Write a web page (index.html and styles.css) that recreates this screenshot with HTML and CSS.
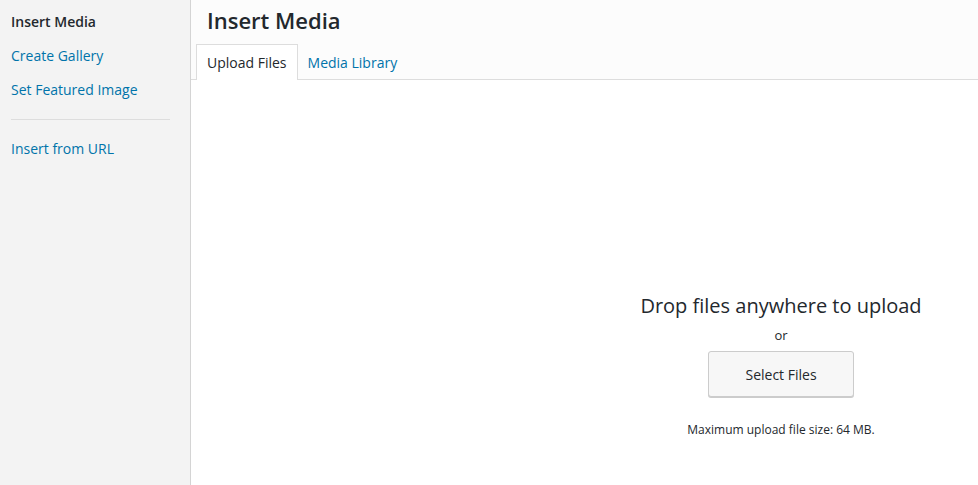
FILE: index.html
```html
<!DOCTYPE html>
<html lang="en">
<head>
    <meta charset="UTF-8">
    <title>Insert Media</title>
    <link rel="stylesheet" href="styles.css">
</head>
<body>

<div class="media-modal">
    <!-- Left menu -->
    <div class="media-menu">
        <a class="menu-item active">Insert Media</a>
        <a class="menu-item" href="#">Create Gallery</a>
        <a class="menu-item" href="#">Set Featured Image</a>
        <div class="separator"></div>
        <a class="menu-item" href="#">Insert from URL</a>
    </div>

    <!-- Main frame -->
    <div class="media-frame">
        <div class="frame-header">
            <h1 class="frame-title">Insert Media</h1>
            <div class="router">
                <a class="tab active">Upload Files</a>
                <a class="tab" href="#">Media Library</a>
            </div>
        </div>

        <div class="frame-content">
            <div class="upload-ui">
                <h2 class="upload-instructions">Drop files anywhere to upload</h2>
                <p class="upload-or">or</p>
                <button class="browser-button">Select Files</button>
                <p class="max-upload-size">Maximum upload file size: 64 MB.</p>
            </div>
        </div>
    </div>
</div>

</body>
</html>
```

FILE: styles.css
```css
body {
    margin: 0;
    font-family: "Open Sans", "Liberation Sans", sans-serif;
    color: #23282d;
    background-color: #fff;
}
.media-modal {
    display: flex;
    height: 485px;
    overflow: hidden;
}
.media-menu {
    width: 190px;
    flex-shrink: 0;
    background-color: #f3f3f3;
    border-right: 1px solid #d4d4d4;
    padding-top: 5px;
    display: flex;
    flex-direction: column;
}
.menu-item {
    display: block;
    padding: 8px 11px;
    font-size: 14px;
    line-height: 18px;
    color: #0073aa;
    text-decoration: none;
}
.menu-item.active {
    color: #23282d;
    font-weight: 600;
}
.separator {
    height: 1px;
    background-color: #ddd;
    margin: 12px 20px 12px 11px;
}
.media-frame {
    flex-grow: 1;
    display: flex;
    flex-direction: column;
}
.frame-header {
    background-color: #fcfcfc;
    border-bottom: 1px solid #ddd;
}
.frame-title {
    margin: 0;
    padding: 0 16px;
    font-size: 22px;
    font-weight: 600;
    line-height: 41px;
    height: 44px;
    color: #23282d;
}
.router {
    display: flex;
    padding-left: 5px;
}
.tab {
    display: block;
    padding: 0 10px;
    height: 35px;
    line-height: 35px;
    font-size: 14px;
    color: #0073aa;
    text-decoration: none;
    border-style: solid;
    border-color: transparent;
    border-width: 1px 0 0;
    margin-bottom: -1px;
}
.tab.active {
    color: #23282d;
    background-color: #fff;
    border-color: #ddd;
    border-width: 1px 1px 0;
}
.frame-content {
    flex-grow: 1;
    padding-top: 212px;
}
.upload-ui {
    width: 400px;
    margin-left: 390px;
    display: flex;
    flex-direction: column;
    align-items: center;
    text-align: center;
}
.upload-instructions {
    margin: 0;
    font-size: 20px;
    font-weight: 400;
    line-height: 28px;
    color: #23282d;
}
.upload-or {
    margin: 5px 0 6px;
    font-size: 13px;
    line-height: 20px;
    color: #23282d;
}
.browser-button {
    width: 146px;
    height: 46px;
    font-family: inherit;
    font-size: 14px;
    color: #23282d;
    background-color: #f7f7f7;
    border: 1px solid #ccc;
    border-radius: 3px;
    box-shadow: 0 1px 0 #ccc;
    cursor: pointer;
}
.max-upload-size {
    margin: 24px 0 0;
    font-size: 12px;
    line-height: 18px;
    color: #23282d;
}
```
